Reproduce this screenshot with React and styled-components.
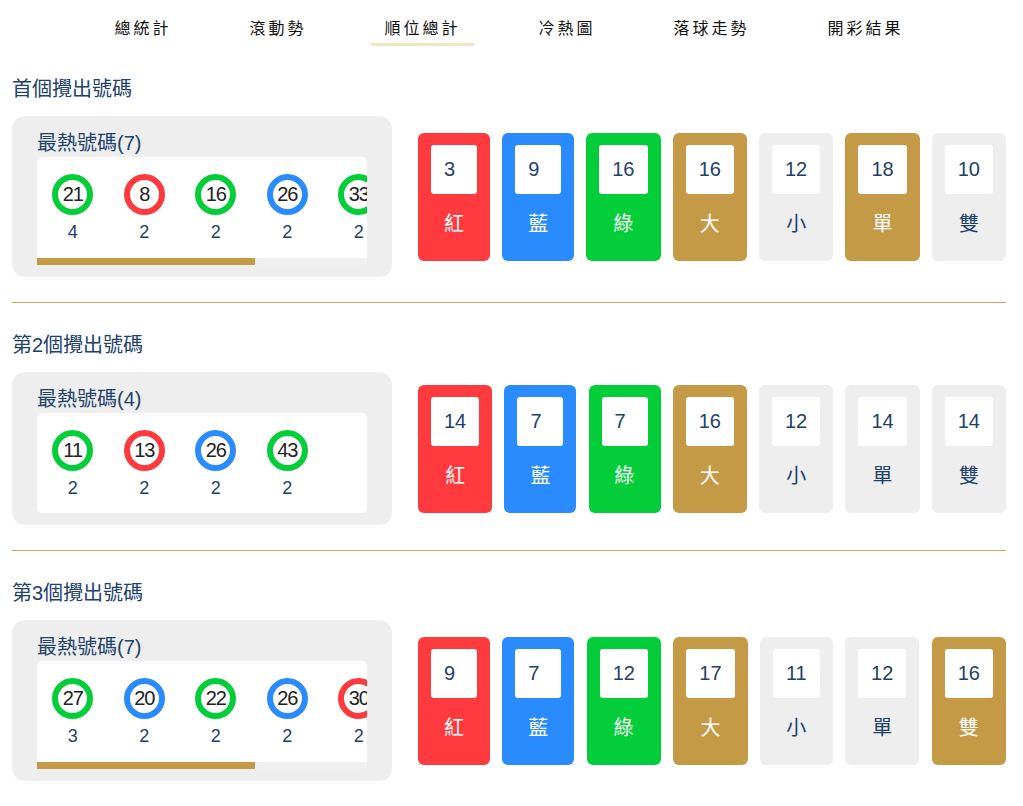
import React from "react";
import styled, { createGlobalStyle } from "styled-components";

const NAVY = "#21416b";
const GOLD = "#c49a47";
const ITEM_W = 71.5;
const BOX_W = 330;

const GlobalStyle = createGlobalStyle`
  html, body { margin: 0; padding: 0; background: #ffffff; }
  body { font-family: "Liberation Sans", "Noto Sans CJK TC", sans-serif; }
`;

const Page = styled.div`
  padding: 0 17px 0 12px;
  font-family: "Liberation Sans", "Noto Sans CJK TC", sans-serif;
`;

const Nav = styled.nav`
  display: flex;
  justify-content: center;
  gap: 52px;
  padding-top: 16px;
`;

const NavItem = styled.div`
  padding: 0 13px 5px;
  font-family: "Noto Sans CJK TC", sans-serif;
  font-weight: 400;
  font-size: 16px;
  line-height: 22px;
  letter-spacing: 3px;
  color: #111;
  border-bottom: 3px solid transparent;
  ${(p) =>
    p.$active &&
    `border-image: linear-gradient(to bottom, #ddb86c 0%, #e4c484 50%, #f4e6c6 100%) 1;`}
`;

const Section = styled.section`
  padding-top: ${(p) => (p.$first ? "29px" : "28px")};
`;

const Heading = styled.h2`
  margin: 0 0 13px;
  font-family: "Liberation Sans", "Noto Sans CJK TC", sans-serif;
  font-weight: 400;
  font-size: 20px;
  line-height: 28px;
  color: ${NAVY};
`;

const Row = styled.div`
  display: flex;
  align-items: center;
  gap: 26px;
`;

const Card = styled.div`
  flex: 0 0 auto;
  width: 380px;
  min-width: 0;
  box-sizing: border-box;
  background: #eeeeee;
  border-radius: 13px;
  padding: 15px 25px 12px;
`;

const CardTitle = styled.div`
  font-size: 20px;
  line-height: 24px;
  color: ${NAVY};
  margin-bottom: 2px;
`;

const BallBox = styled.div`
  width: ${BOX_W}px;
  background: #fff;
  border-radius: 5px 5px ${(p) => (p.$scroll ? "0 0" : "5px 5px")};
  overflow: hidden;
`;

const BallList = styled.div`
  display: flex;
  overflow: hidden;
`;

const ScrollTrack = styled.div`
  height: 7px;
  margin-top: 1px;
  background: #f0f0f0;
`;

const ScrollThumb = styled.div`
  height: 100%;
  background: ${GOLD};
`;

const BallItem = styled.div`
  flex: 0 0 ${ITEM_W}px;
  display: flex;
  flex-direction: column;
  align-items: center;
  padding: 17px 0 13px;
`;

const Ball = styled.div`
  width: 41px;
  height: 41px;
  box-sizing: border-box;
  border-radius: 50%;
  border: 6px solid ${(p) => p.$color};
  background: #fff;
  display: flex;
  align-items: center;
  justify-content: center;
  font-size: 20px;
  color: #222;
  letter-spacing: -1px;
  white-space: nowrap;
`;

const Count = styled.div`
  margin-top: 5px;
  font-size: 18px;
  line-height: 24px;
  color: ${NAVY};
`;

const Tiles = styled.div`
  flex: 1;
  min-width: 0;
  display: flex;
  justify-content: space-between;
`;

const Tile = styled.div`
  box-sizing: border-box;
  height: 128px;
  padding: 12px 13px 0;
  border-radius: 6px;
  background: ${(p) => p.$bg};
  display: flex;
  flex-direction: column;
  align-items: center;
`;

const TileNum = styled.div`
  box-sizing: border-box;
  min-width: 46px;
  height: 49px;
  padding: 0 13px;
  background: #fff;
  border-radius: 3px;
  font-size: 20px;
  line-height: 49px;
  color: ${NAVY};
  text-align: left;
`;

const TileLabel = styled.div`
  margin-top: 15px;
  font-family: "Noto Sans CJK TC", sans-serif;
  font-size: 20px;
  line-height: 28px;
  color: ${(p) => (p.$light ? "#ffffff" : NAVY)};
`;

const Divider = styled.div`
  margin-top: 25px;
  border-top: 1px solid #cfa85f;
`;

const C = {
  red: "#ff3a3e",
  blue: "#2a8bff",
  green: "#03ce39",
  gold: GOLD,
  grey: "#eeeeee",
};

const navItems = ["總統計", "滾動勢", "順位總計", "冷熱圖", "落球走勢", "開彩結果"];

const sections = [
  {
    title: "首個攪出號碼",
    hot: 7,
    balls: [
      [21, "green", 4],
      [8, "red", 2],
      [16, "green", 2],
      [26, "blue", 2],
      [33, "green", 2],
      [35, "red", 2],
      [44, "green", 2],
    ],
    tiles: [3, 9, 16, 16, 12, 18, 10],
    hi: [true, false, true, false],
  },
  {
    title: "第2個攪出號碼",
    hot: 4,
    balls: [
      [11, "green", 2],
      [13, "red", 2],
      [26, "blue", 2],
      [43, "green", 2],
    ],
    tiles: [14, 7, 7, 16, 12, 14, 14],
    hi: [true, false, false, false],
  },
  {
    title: "第3個攪出號碼",
    hot: 7,
    balls: [
      [27, "green", 3],
      [20, "blue", 2],
      [22, "green", 2],
      [26, "blue", 2],
      [30, "red", 2],
      [34, "red", 2],
      [46, "red", 2],
    ],
    tiles: [9, 7, 12, 17, 11, 12, 16],
    hi: [true, false, false, true],
  },
];

const labels = ["紅", "藍", "綠", "大", "小", "單", "雙"];

function HotCard({ s }) {
  const total = s.balls.length * ITEM_W;
  const scroll = total > BOX_W;
  const ratio = Math.min(1, BOX_W / total);
  return (
    <Card>
      <CardTitle>最熱號碼({s.hot})</CardTitle>
      <BallBox $scroll={scroll}>
        <BallList>
          {s.balls.map(([n, c, cnt], i) => (
            <BallItem key={i}>
              <Ball $color={C[c]}>{n}</Ball>
              <Count>{cnt}</Count>
            </BallItem>
          ))}
        </BallList>
        {scroll && (
          <ScrollTrack>
            <ScrollThumb style={{ width: `${ratio * 100}%` }} />
          </ScrollTrack>
        )}
      </BallBox>
    </Card>
  );
}

export default function App() {
  return (
    <Page>
      <GlobalStyle />
      <Nav>
        {navItems.map((n) => (
          <NavItem key={n} $active={n === "順位總計"}>
            {n}
          </NavItem>
        ))}
      </Nav>
      {sections.map((s, si) => (
        <Section key={s.title} $first={si === 0}>
          <Heading>{s.title}</Heading>
          <Row>
            <HotCard s={s} />
            <Tiles>
              {s.tiles.map((v, i) => {
                let bg;
                let light = true;
                if (i === 0) bg = C.red;
                else if (i === 1) bg = C.blue;
                else if (i === 2) bg = C.green;
                else {
                  const on = s.hi[i - 3];
                  bg = on ? C.gold : C.grey;
                  light = on;
                }
                return (
                  <Tile key={i} $bg={bg}>
                    <TileNum>{v}</TileNum>
                    <TileLabel $light={light}>{labels[i]}</TileLabel>
                  </Tile>
                );
              })}
            </Tiles>
          </Row>
          {si < sections.length - 1 && <Divider />}
        </Section>
      ))}
    </Page>
  );
}
